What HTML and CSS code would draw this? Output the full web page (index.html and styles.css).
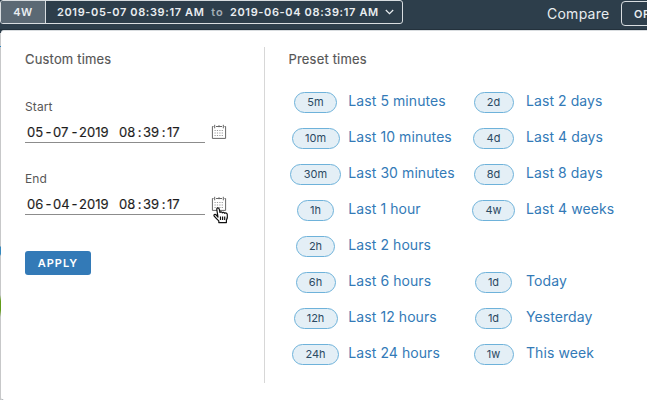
FILE: index.html
```html
<!DOCTYPE html>
<html lang="en">
<head>
<meta charset="utf-8">
<title>Time range</title>
<link rel="stylesheet" href="styles.css">
</head>
<body>
<header class="bar">
  <div class="range">
    <span class="range-tag">4W</span>
    <span class="range-text"><span class="from">2019-05-07 08:39:17 AM</span><span class="to">to</span><span class="until">2019-06-04 08:39:17 AM</span></span>
    <svg class="chevron" width="9" height="6" viewBox="0 0 9 6"><path d="M.8 1 4.5 4.7 8.2 1"/></svg>
  </div>
  <span class="compare">Compare</span>
  <button class="off">OFF</button>
</header>
<div class="edge"></div>
<main class="panel">
  <section class="custom">
    <h2>Custom times</h2>
    <label class="start-label">Start</label>
    <div class="field">
      <div class="input"><span class="n">05</span><span class="d">-</span><span class="n">07</span><span class="d">-</span><span class="y">2019</span><span class="n">08</span><span class="c">:</span><span class="n">39</span><span class="c">:</span><span class="n last">17</span></div>
      <svg class="cal" width="16" height="16" viewBox="0 0 16 16"><path class="frame" d="M2.5 2.5H1.4V14.4H14.6V2.5H13.5M5 2.5H11M3.7 .8V4.3M12.3 .8V4.3M8 1.2V3.2"/><path class="dots" d="M3.5 6.5H13M3.5 9H13M3.5 11.5H13"/></svg>
    </div>
    <label class="end-label">End</label>
    <div class="field">
      <div class="input"><span class="n">06</span><span class="d">-</span><span class="n">04</span><span class="d">-</span><span class="y">2019</span><span class="n">08</span><span class="c">:</span><span class="n">39</span><span class="c">:</span><span class="n last">17</span></div>
      <svg class="cal" width="16" height="16" viewBox="0 0 16 16"><path class="frame" d="M2.5 2.5H1.4V14.4H14.6V2.5H13.5M5 2.5H11M3.7 .8V4.3M12.3 .8V4.3M8 1.2V3.2"/><path class="dots" d="M3.5 6.5H13M3.5 9H13M3.5 11.5H13"/></svg>
      <svg class="hand" width="16" height="17" viewBox="0 0 16 17"><path d="M5 10 3.8 2.6C3.5.4 5.9.3 6.3 2.3L7 5.5C7.6 4.5 9 4.7 9.3 5.8 10 5 11.2 5.1 11.6 6.3 12.6 5.6 14.1 6.1 14.3 7.5 14.7 10 14.4 11.5 13.4 13.2V15.6H5.8V13.9C4.2 12.4 2.5 10.8 1.2 9.2.3 7.7 2 6.7 3.3 8Z"/><path d="M7.5 9.5V13M9.6 9.5V13M11.7 9.5V13"/></svg>
    </div>
    <button class="apply">APPLY</button>
  </section>
  <section class="presets">
    <h2>Preset times</h2>
    <div class="grid">
      <span class="pill w43">5m</span><a>Last 5 minutes</a><span class="pill w40">2d</span><a>Last 2 days</a>
      <span class="pill w48">10m</span><a>Last 10 minutes</a><span class="pill w41">4d</span><a>Last 4 days</a>
      <span class="pill w51">30m</span><a>Last 30 minutes</a><span class="pill w40">8d</span><a>Last 8 days</a>
      <span class="pill w37">1h</span><a>Last 1 hour</a><span class="pill w43">4w</span><a>Last 4 weeks</a>
      <span class="pill w39">2h</span><a>Last 2 hours</a><span></span><span></span>
      <span class="pill w40">6h</span><a>Last 6 hours</a><span class="pill w37">1d</span><a>Today</a>
      <span class="pill w44">12h</span><a>Last 12 hours</a><span class="pill w37">1d</span><a>Yesterday</a>
      <span class="pill w47">24h</span><a>Last 24 hours</a><span class="pill w40">1w</span><a>This week</a>
    </div>
  </section>
</main>
</body>
</html>
```
FILE: styles.css
```css
* { box-sizing: border-box; }
body { margin: 0; width: 647px; height: 400px; overflow: hidden; background: #2d3e4b; font-family: Inter, "Open Sans", sans-serif; position: relative; }
.bar { height: 30px; display: flex; align-items: flex-start; background: #2d3e4b; color: #e9edf0; border-bottom: 1px solid #23313c; }
.range { display: flex; align-items: center; width: 403px; height: 24px; margin-top: 0; border: 1px solid #d8dde0; border-radius: 3px; font-size: 11px; font-weight: 600; overflow: hidden; flex: none; }
.range-tag { width: 45px; height: 22px; line-height: 23px; text-align: center; background: #5b6974; border-right: 1px solid #d8dde0; letter-spacing: .6px; }
.range-text { display: flex; margin-left: 11px; line-height: 23px; white-space: nowrap; width: 322px; }
.from, .until { width: 147px; letter-spacing: .63px; }
.to { width: 26px; text-align: center; color: #a4afb7; letter-spacing: 1px; padding-left: 1px; }
.chevron { margin-left: 6px; fill: none; stroke: #e9edf0; stroke-width: 1.2; flex: none; }
.compare { width: 75px; margin-left: 144px; font-size: 14px; line-height: 27px; letter-spacing: .25px; }
.off { width: 50px; height: 25px; margin: 1px -24px 0 -1px; flex: none; border: 1px solid #d8dde0; border-radius: 4px; background: none; color: #e9edf0; font: 600 11px/20px Inter, sans-serif; letter-spacing: .6px; text-align: left; padding: 0 0 0 12px; }
.edge { position: absolute; left: 0; top: 33px; width: 2px; height: 367px; background: linear-gradient(#2583c4 0 1px, transparent 1px) 0 13px / 1px 7px no-repeat, linear-gradient(transparent 213px, #3588bd 214px 221px, transparent 223px 262px, #629c19 268px 277px, transparent 284px), #c7c8c9; }
.panel { position: relative; display: flex; width: 646px; height: 370px; margin-left: 1px; background: #fff; border-radius: 3px 0 0 3px; padding: 17px 0 18px 24px; border-top: 1px solid #d9dde0; }
h2 { margin: 0; font-size: 13px; font-weight: 400; line-height: 20px; color: #555; letter-spacing: .18px; -webkit-text-stroke: .15px #555; white-space: nowrap; }
.custom { width: 240px; height: 336px; border-right: 1px solid #d7d7d7; display: flex; flex-direction: column; align-items: flex-start; }
label { font-size: 12px; line-height: 16px; color: #575757; letter-spacing: .1px; }
.custom, .presets { margin-top: -1px; padding-top: 2px; }
.start-label { margin-top: 30px; }
.end-label { margin-top: 28px; }
.field { display: flex; height: 28px; position: relative; }
.input { width: 180px; height: 28px; border-bottom: 1px solid #8c8c8c; display: flex; font-size: 13px; line-height: 34px; color: #1d1d1d; padding-left: 2px; -webkit-text-stroke: .15px #1d1d1d; }
.n { width: 17px; }
.d { width: 9px; text-align: center; }
.y { width: 40px; }
.c { width: 7px; text-align: center; }
.last { margin-left: 0; }
.cal { margin: 9px 0 0 6px; fill: none; }
.frame { stroke: #666; stroke-width: 1; }
.dots { stroke: #999; stroke-width: 1; stroke-dasharray: 1.2 1.2; }
.hand { position: absolute; left: 188px; top: 20px; fill: #fff; stroke: #111; stroke-width: 1.2; stroke-linejoin: round; }
.apply { width: 66px; height: 24px; margin-top: 36px; padding: 0; border: 0; border-radius: 3px; background: #337ab7; color: #fff; font: 600 11px/24px Inter, sans-serif; letter-spacing: .95px; }
.presets { padding-left: 23.5px; }
.grid { display: grid; grid-template-columns: 54px 117px 56px 110px; grid-auto-rows: 35.95px; column-gap: 3px; margin: 16px 0 0 0; align-items: center; justify-items: center; }
.grid a { justify-self: start; padding-left: 2.8px; color: #337ab7; font-size: 14px; line-height: 20px; letter-spacing: .08px; margin-top: -3px; white-space: nowrap; }
.grid .pill + a:nth-child(4n) { padding-left: 1.5px; }
.pill { height: 21px; border: 1px solid #6eb2da; border-radius: 11px; background: #e4eff6; color: #2b4a63; font-size: 11px; line-height: 19px; text-align: center; }
.w37 { width: 37px; } .w39 { width: 39px; } .w40 { width: 40px; } .w41 { width: 41px; } .w43 { width: 43px; } .w44 { width: 44px; } .w47 { width: 47px; } .w48 { width: 48px; } .w51 { width: 51px; }
```
